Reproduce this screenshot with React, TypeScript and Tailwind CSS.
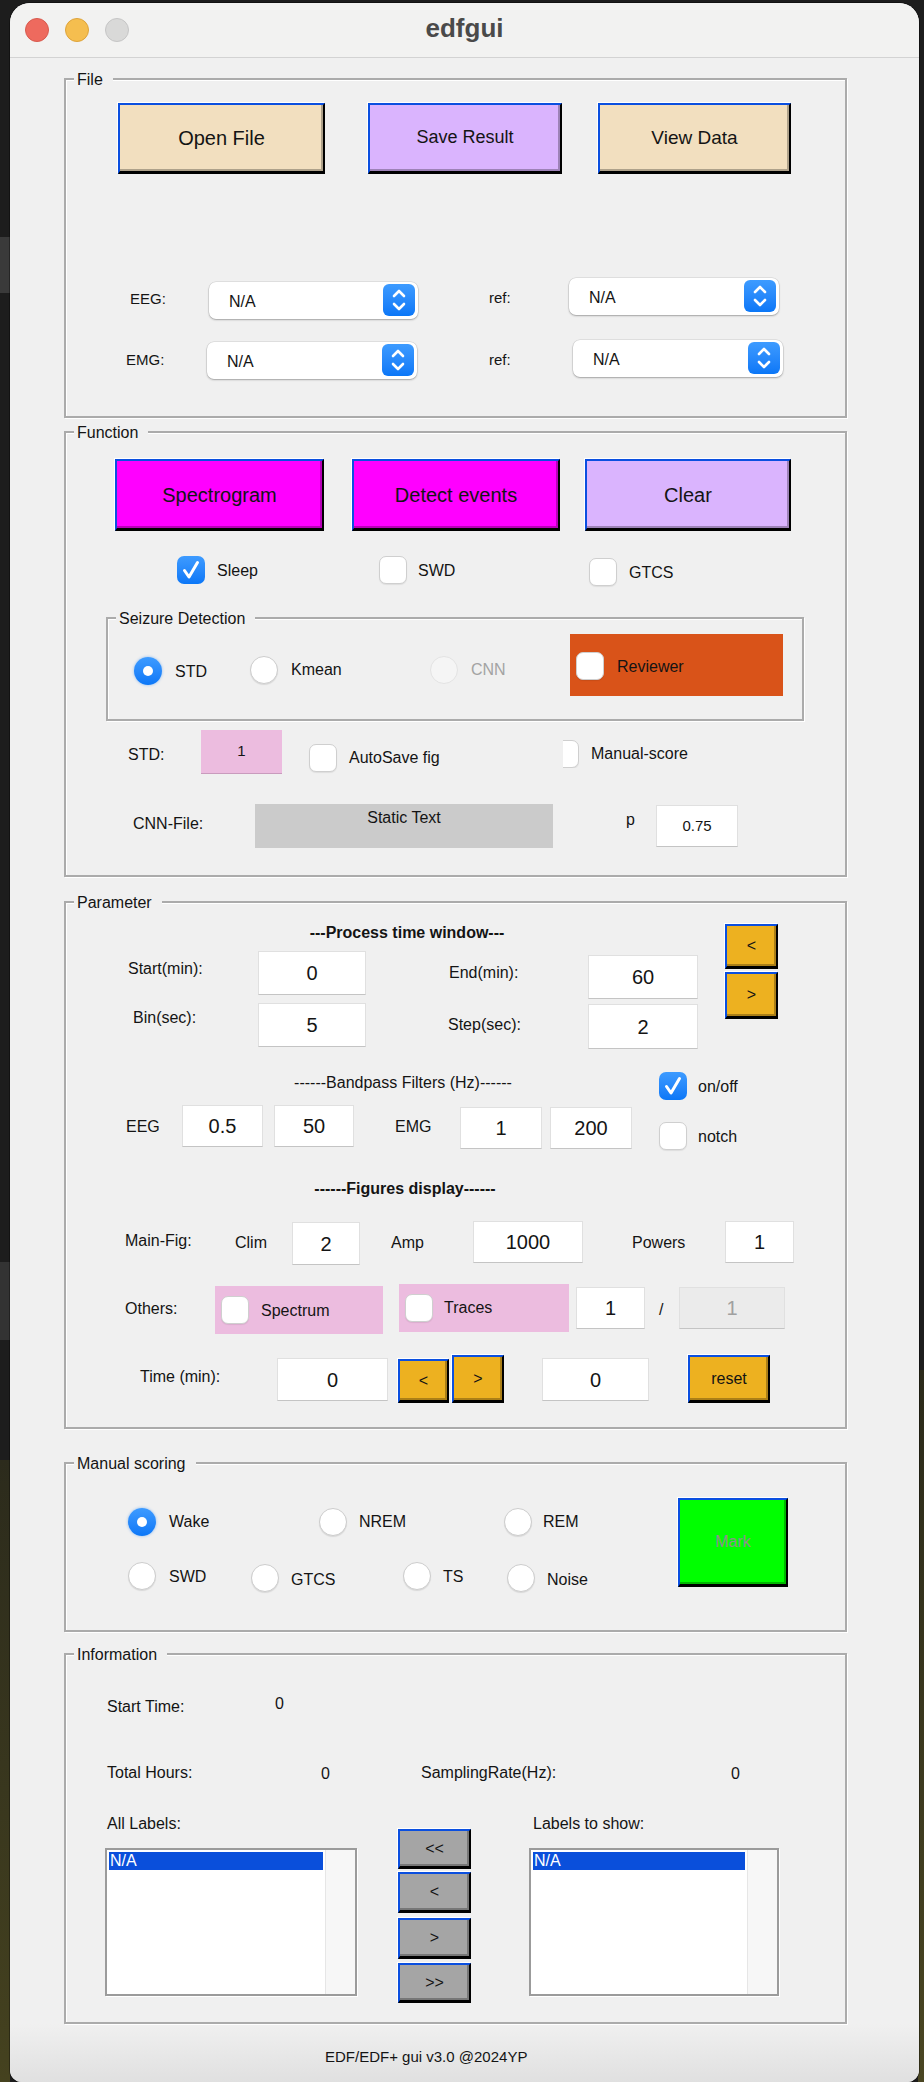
import React from "react";

type P = { c?: string; children?: React.ReactNode };

const L = ({ c = "", children }: P) => (
  <div className={`shrink-0 whitespace-nowrap leading-[20px] ${c}`}>{children}</div>
);

const Btn = ({ c = "", children }: P) => (
  <div
    className={`shrink-0 flex items-center justify-center border-t-2 border-l-2 border-t-[#0b4fe0] border-l-[#0b4fe0] border-b-[3px] border-r-2 border-b-black border-r-black shadow-[inset_-2px_-2px_0_rgba(0,0,0,0.28),-1px_-1px_0_#ffffff] ${c}`}
  >
    {children}
  </div>
);

const Edit = ({ c = "", children }: P) => (
  <div className={`shrink-0 flex items-center justify-center border border-[#e0e0e0] border-b-[#c4c4c4] ${c}`}>
    {children}
  </div>
);

const Check = ({ on = false, c = "" }: { on?: boolean; c?: string }) =>
  on ? (
    <div
      className={`shrink-0 w-[28px] h-[28px] rounded-[7px] bg-linear-to-b from-[#3d9bff] to-[#0a77f7] flex items-center justify-center ${c}`}
    >
      <svg width="28" height="28" viewBox="0 0 28 28">
        <path
          d="M7.5 14.5 L12 21 L20.5 6.5"
          fill="none"
          stroke="#fff"
          strokeWidth="3"
          strokeLinecap="round"
          strokeLinejoin="round"
        />
      </svg>
    </div>
  ) : (
    <div
      className={`shrink-0 w-[28px] h-[28px] rounded-[7px] bg-white border border-[#cfcfcf] shadow-[0_1px_1px_rgba(0,0,0,0.08)] ${c}`}
    />
  );

const Radio = ({ on = false, dis = false, c = "" }: { on?: boolean; dis?: boolean; c?: string }) =>
  on ? (
    <div
      className={`shrink-0 w-[28px] h-[28px] rounded-full bg-linear-to-b from-[#3d9bff] to-[#0a77f7] flex items-center justify-center shadow-[0_0_3px_rgba(10,119,247,0.45)] ${c}`}
    >
      <div className="w-[10px] h-[10px] rounded-full bg-white" />
    </div>
  ) : (
    <div
      className={`shrink-0 w-[28px] h-[28px] rounded-full border ${
        dis
          ? "bg-[#f5f5f5] border-[#e3e3e3]"
          : "bg-white border-[#cdcdcd] shadow-[0_1px_1px_rgba(0,0,0,0.1)]"
      } ${c}`}
    />
  );

const Select = ({ c = "" }: { c?: string }) => (
  <div
    className={`shrink-0 h-[37px] bg-white rounded-[7px] shadow-[0_1px_2px_rgba(0,0,0,0.28),0_0_0_0.5px_rgba(0,0,0,0.12)] flex items-center ${c}`}
  >
    <span className="pl-[20px] pt-[3px] text-[16px] leading-[20px]">N/A</span>
    <div className="ml-auto mr-[3px] mb-[2px] w-[32px] h-[32px] rounded-[6px] bg-linear-to-b from-[#3d9bff] to-[#0a77f7] flex items-center justify-center">
      <svg width="32" height="32" viewBox="0 0 32 32">
        <path
          d="M11 12 L16 7 L21 12 M11 20 L16 25 L21 20"
          fill="none"
          stroke="#fff"
          strokeWidth="2.6"
          strokeLinecap="round"
          strokeLinejoin="round"
        />
      </svg>
    </div>
  </div>
);

const Panel = ({ title, c = "", children }: { title: string; c?: string; children?: React.ReactNode }) => (
  <div
    className={`relative shrink-0 border-2 border-[#ababab] shadow-[inset_1px_1px_0_#ffffff,1px_1px_0_#ffffff] ${c}`}
  >
    <div className="absolute left-[8px] top-[-10px] bg-[#f0f0f0] pl-[3px] pr-[10px] text-[16px] leading-[20px] whitespace-nowrap">
      {title}
    </div>
    {children}
  </div>
);

const ListBox = ({ c = "", selW = "" }: { c?: string; selW?: string }) => (
  <div className={`h-[148px] bg-white border-2 border-[#9b9b9b] shadow-[1px_1px_0_#ffffff] flex ${c}`}>
    <div className="flex-1 pt-[2px] pl-[2px]">
      <div className={`h-[18px] bg-[#0a4fdb] text-white text-[16px] leading-[18px] pl-[1px] ${selW}`}>N/A</div>
    </div>
    <div className="w-[30px] bg-[#f7f7f7] border-l border-[#e6e6e6]" />
  </div>
);

export default function App() {
  return (
    <div className="relative w-[924px] h-[2082px] overflow-hidden bg-[#1d1d1d] pt-[3px] pl-[10px] [font-family:'Liberation_Sans',Arial,Helvetica,sans-serif] text-[#141414]">
      {/* desktop behind the window */}
      <div className="absolute left-0 top-[237px] w-[10px] h-[56px] bg-[#3a3a3a]" />
      <div className="absolute left-0 top-[1262px] w-[10px] h-[78px] bg-[#333333]" />
      <div className="absolute left-0 top-[1460px] w-[10px] h-[622px] bg-linear-to-b from-[#2c2b1c] to-[#45421f]" />
      <div className="absolute right-0 top-[1370px] w-[6px] h-[712px] bg-linear-to-b from-[#2b2a1a] to-[#4a4622]" />

      {/* window */}
      <div className="relative w-[909px] h-[2079px] rounded-t-[20px] rounded-b-[12px] overflow-hidden bg-[#f0f0f0] shadow-[0_0_0_1px_rgba(0,0,0,0.35)] flex flex-col">
        {/* title bar */}
        <div className="relative shrink-0 h-[55px] bg-[#f2f2f1] border-b border-[#d3d3d3]">
          <div className="flex pt-[15px] pl-[15px] gap-[16px]">
            <div className="w-[24px] h-[24px] rounded-full bg-[#ee6a5e] border border-[#d75a4e]" />
            <div className="w-[24px] h-[24px] rounded-full bg-[#f5be4f] border border-[#dda33b]" />
            <div className="w-[24px] h-[24px] rounded-full bg-[#d9d9d8] border border-[#c5c5c5]" />
          </div>
          <div className="absolute inset-x-0 top-[10px] text-center text-[26px] leading-[30px] font-bold text-[#4a4a4a]">
            edfgui
          </div>
        </div>

        {/* body */}
        <div className="flex flex-col flex-1 text-[16px]">
          {/* File */}
          <Panel title="File" c="ml-[54px] mt-[20px] w-[783px] h-[340px]">
            <div className="flex items-start mt-[23px] h-[71px]">
              <Btn c="ml-[52px] w-[207px] h-[71px] bg-[#f2dfbf] text-[20px]">Open File</Btn>
              <Btn c="ml-[43px] w-[194px] h-[71px] bg-[#dab4fe] text-[18px] pb-[2px]">Save Result</Btn>
              <Btn c="ml-[36px] w-[193px] h-[71px] bg-[#f2dfbf] text-[19px]">View Data</Btn>
            </div>
            <div className="flex items-start mt-[104px] h-[41px] text-[15px]">
              <L c="ml-[64px] w-[40px] mt-[11px]">EEG:</L>
              <Select c="ml-[39px] w-[209px] mt-[4px]" />
              <L c="ml-[71px] w-[40px] mt-[10px]">ref:</L>
              <Select c="ml-[40px] w-[210px]" />
            </div>
            <div className="flex items-start mt-[21px] h-[41px] text-[15px]">
              <L c="ml-[60px] w-[44px] mt-[10px]">EMG:</L>
              <Select c="ml-[37px] w-[210px] mt-[2px]" />
              <L c="ml-[72px] w-[40px] mt-[10px]">ref:</L>
              <Select c="ml-[44px] w-[210px]" />
            </div>
          </Panel>

          {/* Function */}
          <Panel title="Function" c="ml-[54px] mt-[13px] w-[783px] h-[446px]">
            <div className="flex items-start mt-[26px] h-[72px]">
              <Btn c="ml-[49px] w-[209px] h-[72px] bg-[#ff00ff] text-[20px]">Spectrogram</Btn>
              <Btn c="ml-[28px] w-[208px] h-[72px] bg-[#ff00ff] text-[20px]">Detect events</Btn>
              <Btn c="ml-[25px] w-[206px] h-[72px] bg-[#dab4fe] text-[20px]">Clear</Btn>
            </div>
            <div className="flex items-start mt-[25px] h-[30px]">
              <Check on c="ml-[111px]" />
              <L c="ml-[12px] w-[60px] mt-[5px]">Sleep</L>
              <Check c="ml-[102px]" />
              <L c="ml-[11px] w-[60px] mt-[5px]">SWD</L>
              <Check c="ml-[111px] mt-[2px]" />
              <L c="ml-[12px] mt-[7px]">GTCS</L>
            </div>
            <Panel title="Seizure Detection" c="ml-[40px] mt-[31px] w-[698px] h-[104px]">
              <div className="flex items-start mt-[15px] h-[62px]">
                <Radio on c="ml-[26px] mt-[23px]" />
                <L c="ml-[13px] w-[50px] mt-[28px]">STD</L>
                <Radio c="ml-[25px] mt-[22px]" />
                <L c="ml-[13px] w-[60px] mt-[26px]">Kmean</L>
                <Radio dis c="ml-[79px] mt-[22px]" />
                <L c="ml-[13px] w-[50px] mt-[26px] text-[#a3a3a3]">CNN</L>
                <div className="shrink-0 ml-[49px] w-[213px] h-[62px] bg-[#d95319] flex items-start">
                  <Check c="ml-[6px] mt-[18px]" />
                  <L c="ml-[13px] mt-[23px]">Reviewer</L>
                </div>
              </div>
            </Panel>
            <div className="flex items-start mt-[9px] h-[44px]">
              <L c="ml-[62px] w-[50px] mt-[15px]">STD:</L>
              <div className="shrink-0 ml-[23px] w-[81px] h-[44px] bg-[#ecbcdf] border-b border-[#c99bbd] flex items-center justify-center text-[15px]">
                1
              </div>
              <Check c="ml-[27px] mt-[14px]" />
              <L c="ml-[12px] w-[120px] mt-[18px]">AutoSave fig</L>
              <div className="relative shrink-0 ml-[94px] mt-[10px] w-[16px] h-[28px] overflow-hidden">
                <Check c="absolute right-0 top-0" />
              </div>
              <L c="ml-[12px] mt-[14px]">Manual-score</L>
            </div>
            <div className="flex items-start mt-[30px] h-[44px]">
              <L c="ml-[67px] w-[100px] mt-[10px]">CNN-File:</L>
              <div className="shrink-0 ml-[22px] w-[298px] h-[44px] bg-[#cbcbcb] text-center pt-[4px] leading-[20px]">
                Static Text
              </div>
              <L c="ml-[73px] w-[20px] mt-[6px]">p</L>
              <Edit c="ml-[10px] mt-[1px] w-[82px] h-[42px] bg-white text-[15px]">0.75</Edit>
            </div>
          </Panel>

          {/* Parameter */}
          <Panel title="Parameter" c="ml-[54px] mt-[24px] w-[783px] h-[528px]">
            <div className="flex items-start">
              <div className="shrink-0 w-[632px]">
                <L c="mt-[20px] ml-[141px] w-[400px] text-center font-bold">---Process time window---</L>
                <div className="flex items-start mt-[8px] h-[48px]">
                  <L c="ml-[62px] w-[100px] mt-[8px]">Start(min):</L>
                  <Edit c="ml-[30px] w-[108px] h-[44px] bg-white text-[20px]">0</Edit>
                  <L c="ml-[83px] w-[100px] mt-[12px]">End(min):</L>
                  <Edit c="ml-[39px] mt-[4px] w-[110px] h-[44px] bg-white text-[20px]">60</Edit>
                </div>
                <div className="flex items-start mt-[4px] h-[46px]">
                  <L c="ml-[67px] w-[100px] mt-[5px]">Bin(sec):</L>
                  <Edit c="ml-[25px] w-[108px] h-[44px] bg-white text-[20px]">5</Edit>
                  <L c="ml-[82px] w-[100px] mt-[12px]">Step(sec):</L>
                  <Edit c="ml-[40px] mt-[1px] w-[110px] h-[45px] bg-white text-[20px]">2</Edit>
                </div>
              </div>
              <div className="shrink-0 ml-[27px]">
                <Btn c="mt-[21px] w-[53px] h-[45px] bg-[#edb120]">&lt;</Btn>
                <Btn c="mt-[3px] w-[53px] h-[47px] bg-[#edb120]">&gt;</Btn>
              </div>
            </div>

            <div className="flex items-start mt-[23px]">
              <div className="shrink-0 w-[566px]">
                <L c="mt-[1px] ml-[137px] w-[400px] text-center">------Bandpass Filters (Hz)------</L>
                <div className="flex items-start mt-[12px] h-[44px]">
                  <L c="ml-[60px] w-[40px] mt-[12px]">EEG</L>
                  <Edit c="ml-[16px] w-[81px] h-[42px] bg-white text-[20px]">0.5</Edit>
                  <Edit c="ml-[11px] w-[80px] h-[42px] bg-white text-[20px]">50</Edit>
                  <L c="ml-[41px] w-[50px] mt-[12px]">EMG</L>
                  <Edit c="ml-[15px] mt-[2px] w-[82px] h-[42px] bg-white text-[20px]">1</Edit>
                  <Edit c="ml-[8px] mt-[2px] w-[82px] h-[42px] bg-white text-[20px]">200</Edit>
                </div>
              </div>
              <div className="shrink-0 ml-[27px]">
                <div className="flex items-start">
                  <Check on />
                  <L c="ml-[11px] mt-[5px]">on/off</L>
                </div>
                <div className="flex items-start mt-[22px]">
                  <Check />
                  <L c="ml-[11px] mt-[5px]">notch</L>
                </div>
              </div>
            </div>

            <L c="mt-[29px] ml-[139px] w-[400px] text-center font-bold">------Figures display------</L>
            <div className="flex items-start mt-[22px] h-[44px]">
              <L c="ml-[59px] w-[80px] mt-[10px]">Main-Fig:</L>
              <L c="ml-[30px] w-[40px] mt-[12px]">Clim</L>
              <Edit c="ml-[17px] mt-[1px] w-[68px] h-[43px] bg-white text-[20px]">2</Edit>
              <L c="ml-[31px] w-[40px] mt-[12px]">Amp</L>
              <Edit c="ml-[42px] w-[110px] h-[42px] bg-white text-[20px]">1000</Edit>
              <L c="ml-[49px] w-[60px] mt-[12px]">Powers</L>
              <Edit c="ml-[33px] w-[69px] h-[42px] bg-white text-[20px]">1</Edit>
            </div>
            <div className="flex items-start mt-[19px] h-[53px]">
              <L c="ml-[59px] w-[70px] mt-[15px]">Others:</L>
              <div className="shrink-0 ml-[20px] mt-[2px] w-[168px] h-[48px] bg-[#ecbcdf] flex items-start">
                <Check c="ml-[6px] mt-[10px]" />
                <L c="ml-[12px] mt-[15px]">Spectrum</L>
              </div>
              <div className="shrink-0 ml-[16px] w-[170px] h-[48px] bg-[#ecbcdf] flex items-start">
                <Check c="ml-[6px] mt-[10px]" />
                <L c="ml-[11px] mt-[14px]">Traces</L>
              </div>
              <Edit c="ml-[7px] mt-[3px] w-[69px] h-[42px] bg-white text-[20px]">1</Edit>
              <L c="ml-[14px] w-[10px] mt-[16px]">/</L>
              <Edit c="ml-[10px] mt-[3px] w-[106px] h-[42px] bg-[#ebebeb] text-[#a0a0a0] text-[20px]">1</Edit>
            </div>
            <div className="flex items-start mt-[18px] h-[48px]">
              <L c="ml-[74px] w-[100px] mt-[12px]">Time (min):</L>
              <Edit c="ml-[37px] mt-[3px] w-[111px] h-[43px] bg-white text-[20px]">0</Edit>
              <Btn c="ml-[10px] mt-[4px] w-[51px] h-[44px] bg-[#edb120]">&lt;</Btn>
              <Btn c="ml-[3px] w-[52px] h-[48px] bg-[#edb120]">&gt;</Btn>
              <Edit c="ml-[38px] mt-[3px] w-[107px] h-[43px] bg-white text-[20px]">0</Edit>
              <Btn c="ml-[39px] w-[82px] h-[48px] bg-[#edb120]">reset</Btn>
            </div>
          </Panel>

          {/* Manual scoring */}
          <Panel title="Manual scoring" c="ml-[54px] mt-[33px] w-[783px] h-[170px]">
            <div className="flex items-start">
              <div className="shrink-0 w-[600px]">
                <div className="flex items-start mt-[44px] h-[28px]">
                  <Radio on c="ml-[62px]" />
                  <L c="ml-[13px] w-[60px] mt-[4px]">Wake</L>
                  <Radio c="ml-[90px]" />
                  <L c="ml-[12px] w-[60px] mt-[4px]">NREM</L>
                  <Radio c="ml-[85px]" />
                  <L c="ml-[11px] mt-[4px]">REM</L>
                </div>
                <div className="flex items-start mt-[26px] h-[30px]">
                  <Radio c="ml-[62px]" />
                  <L c="ml-[13px] w-[60px] mt-[5px]">SWD</L>
                  <Radio c="ml-[22px] mt-[2px]" />
                  <L c="ml-[12px] w-[60px] mt-[8px]">GTCS</L>
                  <Radio c="ml-[52px]" />
                  <L c="ml-[12px] w-[40px] mt-[5px]">TS</L>
                  <Radio c="ml-[24px] mt-[2px]" />
                  <L c="ml-[12px] mt-[8px]">Noise</L>
                </div>
              </div>
              <Btn c="ml-[12px] mt-[34px] w-[110px] h-[89px] bg-[#00ff00] text-[#8f8f8f]">Mark</Btn>
            </div>
          </Panel>

          {/* Information */}
          <Panel title="Information" c="ml-[54px] mt-[21px] w-[783px] h-[371px]">
            <div className="flex items-start mt-[39px] h-[23px]">
              <L c="ml-[41px] w-[150px] mt-[3px]">Start Time:</L>
              <L c="ml-[18px]">0</L>
            </div>
            <div className="flex items-start mt-[46px] h-[21px]">
              <L c="ml-[41px] w-[150px]">Total Hours:</L>
              <L c="ml-[64px] w-[20px] mt-[1px]">0</L>
              <L c="ml-[80px] w-[200px]">SamplingRate(Hz):</L>
              <L c="ml-[110px] mt-[1px]">0</L>
            </div>
            <div className="flex items-start mt-[30px]">
              <div className="shrink-0 ml-[39px] w-[252px]">
                <L c="pl-[2px]">All Labels:</L>
                <ListBox c="mt-[14px]" selW="w-[214px]" />
              </div>
              <div className="shrink-0 ml-[41px] w-[73px] mt-[15px]">
                <Btn c="w-[73px] h-[40px] bg-[#a5a5a5]">&lt;&lt;</Btn>
                <Btn c="mt-[3px] w-[73px] h-[41px] bg-[#a5a5a5]">&lt;</Btn>
                <Btn c="mt-[5px] w-[73px] h-[41px] bg-[#a5a5a5]">&gt;</Btn>
                <Btn c="mt-[4px] w-[73px] h-[40px] bg-[#a5a5a5]">&gt;&gt;</Btn>
              </div>
              <div className="shrink-0 ml-[58px] w-[250px]">
                <L c="pl-[4px]">Labels to show:</L>
                <ListBox c="mt-[14px]" selW="w-[212px]" />
              </div>
            </div>
          </Panel>

          {/* footer */}
          <div className="flex-1 bg-linear-to-b from-[#f0f0f0] to-[#e0e0e0] pt-[23px]">
            <L c="ml-[315px] text-[15px]">EDF/EDF+ gui v3.0 @2024YP</L>
          </div>
        </div>
      </div>
    </div>
  );
}
